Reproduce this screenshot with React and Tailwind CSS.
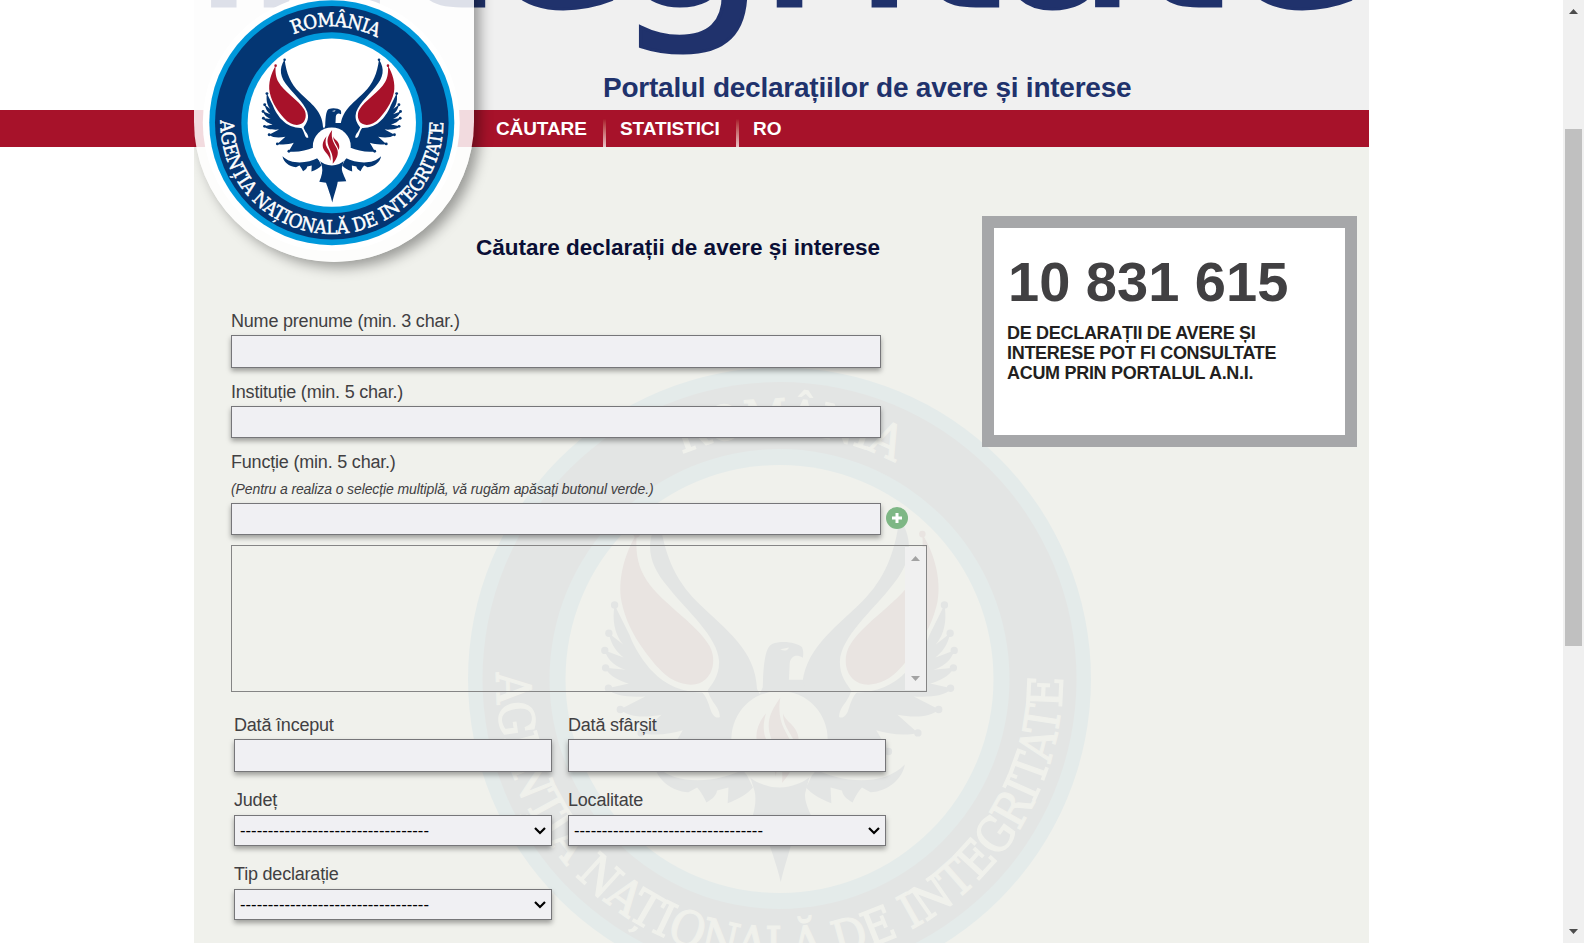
const WING =
  'M1077 425 C1066 520 1040 590 985 650 C910 730 842 780 838 885 L783 1000 L900 1030 C940 1050 1000 1062 1052 1055 L1020 996 C1050 1006 1090 1012 1122 1003 L1072 954 C1110 962 1150 962 1174 940 L1112 905 C1150 907 1190 905 1204 883 L1152 870 C1170 866 1200 852 1210 828 L1160 833 C1180 826 1204 810 1211 781 L1165 800 C1180 786 1195 770 1201 735 L1166 765 C1178 750 1196 715 1187 659 L1150 740 C1140 772 1115 815 1092 840 C1060 880 1000 900 962 893 C948 872 930 850 931 810 C934 745 1010 675 1055 612 C1105 548 1115 490 1077 425 Z';
const RED =
  'M1133 468 C1162 520 1180 590 1170 650 C1155 730 1110 790 1080 828 C1045 872 1000 882 973 866 C943 848 938 800 955 768 C985 708 1085 645 1115 580 C1133 545 1135 510 1133 468 Z';
const LOWER =
  'M870 1100 C930 1135 1035 1150 1090 1088 C1085 1125 1050 1160 1006 1163 L985 1150 C985 1150 975 1160 962 1190 C945 1180 938 1170 936 1158 L908 1150 L910 1192 C880 1180 860 1165 848 1150 Z';
const BALLS = [
  [1187, 659], [1201, 735], [1211, 781], [1209, 828], [1202, 883], [1173, 940], [1122, 1003], [1050, 1053],
];

function Half({ c }) {
  return (
    <g>
      <path d={WING} fill={c.navy} />
      {BALLS.map(([x, y]) => (
        <ellipse key={x} cx={x} cy={y} rx="9" ry="10" fill={c.navy} />
      ))}
      <ellipse cx="1077" cy="427" rx="8" ry="9" fill={c.navy} />
      <path d={RED} fill={c.red} />
      <ellipse cx="1133" cy="468" rx="8" ry="9" fill={c.red} />
      <path d="M960 885 C950 925 930 930 929 960 C938 966 948 955 952 940 C958 920 962 905 974 892 Z" fill={c.bg} />
      <path d={LOWER} fill={c.navy} />
    </g>
  );
}

function Emblem({ c, id }) {
  return (
    <g>
      <circle r="311.5" fill={c.cyan} />
      <circle r="297" fill={c.navy} />
      <circle r="230" fill={c.cyan} />
      <circle r="214" fill={c.bg} />
      <g transform="scale(.4082 .3717) translate(-783 -858)">
        <Half c={c} />
        <g transform="translate(1566 0) scale(-1 1)">
          <Half c={c} />
        </g>
        <path d="M742 880 C744 805 750 772 765 764 C790 753 825 760 838 772 C843 785 841 795 840 801 C824 790 811 797 808 815 L806 860 L840 860 L860 960 L710 960 Z" fill={c.navy} />
        <path d="M785 778 L806 773 C804 782 794 784 785 778 Z" fill={c.bg} />
        <path d="M700 1080 L866 1080 L846 1165 C842 1190 862 1225 873 1258 L820 1262 C815 1300 795 1360 786 1404 C777 1360 757 1300 747 1269 L705 1262 C720 1225 728 1190 722 1160 Z" fill={c.navy} />
        <ellipse cx="783" cy="1020" rx="118" ry="130" fill={c.bg} />
        <g fill={c.red}>
          <path d="M785 908 C765 940 752 965 758 1000 C766 1045 795 1065 789 1138 C812 1110 830 1070 815 1035 C800 1000 775 975 785 908 Z" />
          <path d="M750 950 C728 980 720 1010 732 1040 C742 1065 770 1080 774 1120 C782 1075 765 1050 752 1025 C742 1002 742 980 750 950 Z" />
          <path d="M792 950 C790 985 815 1005 826 1045 C836 1015 825 995 812 980 C802 968 794 962 792 950 Z" />
        </g>
      </g>
      <path id={`${id}-top`} d="M-97.7 -224.7 A245 245 0 0 1 133 -205.8" fill="none" />
      <path id={`${id}-bottom`} d="M-283 -6 A283 283 0 0 0 0 283 A283 283 0 0 0 280.2 -40" fill="none" />
      <g fill={c.text} stroke={c.text} strokeWidth="1.2" fontFamily="'DejaVu Serif Condensed', 'DejaVu Serif', serif" fontSize="48">
        <text textLength="220" lengthAdjust="spacing">
          <textPath href={`#${id}-top`}>ROMÂNIA</textPath>
        </text>
        <text textLength="897" lengthAdjust="spacing">
          <textPath href={`#${id}-bottom`}>AGENȚIA NAȚIONALĂ DE INTEGRITATE</textPath>
        </text>
      </g>
    </g>
  );
}

const SOLID = { navy: '#043673', cyan: '#0099dc', red: '#a8122a', bg: '#ffffff', text: '#ffffff' };
const FAINT = { navy: '#e3e5e4', cyan: '#e4ebea', red: '#e9e4e1', bg: '#f0f1ec', text: '#f0f1ec' };

const LETTERS = [
  ['i', 189.5, 1.1], ['n', 243, 1.1], ['t', 397, 1.05], ['e', 482, 1.07], ['g', 610.5, 1.11], ['r', 756, 1.1],
  ['i', 850, 1.1], ['t', 911, 1.05], ['a', 995, 1.05], ['t', 1134, 1.05], ['e', 1221, 1.07],
];

const FIELD = 'block box-border rounded-none border border-[#767679] bg-[#f0f0f3] shadow-[0_3px_5px_rgba(0,0,0,0.35)] outline-none';

function Label({ children, className = '' }) {
  return <label className={`block h-5 whitespace-nowrap text-[18px] leading-5 tracking-[-0.2px] text-[#414042] ${className}`}>{children}</label>;
}

function Select() {
  return (
    <div className={`${FIELD} flex h-[31px] w-[318px] items-center justify-between pr-[5px] pl-[5px]`}>
      <span className="text-[16.7px] leading-5 text-black">----------------------------------</span>
      <svg width="12" height="8" viewBox="0 0 12 8" className="mt-px">
        <path d="M1 1 L6 6 L11 1" fill="none" stroke="#000" strokeWidth="2.2" />
      </svg>
    </div>
  );
}

function Arrow({ up, color }) {
  return (
    <svg width="9" height="5" viewBox="0 0 9 5">
      <path d={up ? 'M0 5 L4.5 0 L9 5 Z' : 'M0 0 L4.5 5 L9 0 Z'} fill={color} />
    </svg>
  );
}

export default function App() {
  return (
    <div className="relative flex h-[943px] w-[1584px] overflow-hidden bg-white font-['Liberation_Sans',Arial,sans-serif]">
      <main className="w-[1563px]">
        <header className="relative ml-[194px] h-[110px] w-[1175px] overflow-hidden bg-[#f0f0f0]">
          <svg className="absolute top-0 left-0" width="1175" height="110" viewBox="194 0 1175 110">
            <g fill="#20326c" stroke="#20326c" strokeWidth="3" fontFamily="'DejaVu Sans', sans-serif" fontSize="224">
              {LETTERS.map(([l, x, s]) => (
                <text key={x} transform={`translate(${x} 6) scale(${s} 1)`}>{l}</text>
              ))}
            </g>
          </svg>
          <h2 className="relative pt-[72px] pl-[409px] text-[28px] leading-8 font-bold tracking-[-0.235px] whitespace-nowrap text-[#20326c]">
            Portalul declarațiilor de avere și interese
          </h2>
        </header>

        <nav className="flex h-[37px] w-[1369px] bg-[#a7122a] pl-[496px] text-[19px] leading-[37px] font-bold text-white">
          <a className="w-[107px] tracking-[-0.1px]">CĂUTARE</a>
          <span className="mt-[9px] h-7 w-[3px] bg-gradient-to-b from-[#a7122a] to-[#e6c3c9]" />
          <a className="w-[130px] pl-[14px] tracking-[-0.1px]">STATISTICI</a>
          <span className="mt-[9px] h-7 w-[3px] bg-gradient-to-b from-[#a7122a] to-[#e6c3c9]" />
          <a className="pl-[14px]">RO</a>
        </nav>

        <section className="relative ml-[194px] h-[796px] w-[1175px] overflow-hidden bg-[#f0f1ec]">
          <svg className="absolute top-0 left-0" width="1175" height="796" viewBox="194 147 1175 796">
            <g transform="translate(779.5 679)">
              <Emblem c={FAINT} id="watermark" />
            </g>
          </svg>

          <div className="relative flex justify-between pr-3">
            <form className="w-[700px] pt-[88px] pl-[37px]">
              <h1 className="h-[26px] w-[649px] text-right text-[22.5px] leading-[26px] font-bold whitespace-nowrap text-[#0a0f35]">
                Căutare declarații de avere și interese
              </h1>

              <Label className="mt-[50px]">Nume prenume (min. 3 char.)</Label>
              <input className={`${FIELD} mt-1 h-[33px] w-[650px]`} />

              <Label className="mt-[14px]">Instituție (min. 5 char.)</Label>
              <input className={`${FIELD} mt-1 h-8 w-[650px]`} />

              <Label className="mt-[14px]">Funcție (min. 5 char.)</Label>
              <p className="mt-[9px] h-4 text-[14px] leading-4 tracking-[-0.11px] whitespace-nowrap text-[#414042] italic">
                (Pentru a realiza o selecție multiplă, vă rugăm apăsați butonul verde.)
              </p>
              <div className="mt-[6px] flex w-[696px] items-center gap-[5px]">
                <input className={`${FIELD} h-8 w-[650px]`} />
                <svg className="-mt-[3px]" width="22" height="22" viewBox="0 0 22 22">
                  <circle cx="11" cy="11" r="11" fill="#7eb785" />
                  <path d="M11 6 V16 M6 11 H16" stroke="#fff" strokeWidth="3" />
                </svg>
              </div>

              <div className="mt-[10px] flex h-[147px] w-[696px] justify-end border border-[#858585] py-px">
                <div className="flex w-[21px] flex-col items-center justify-between bg-[#f0f0f0] py-[9px]">
                  <Arrow up color="#a3a3a3" />
                  <Arrow color="#a3a3a3" />
                </div>
              </div>

              <div className="mt-[23px] ml-[3px] grid w-[652px] grid-cols-[318px_318px] gap-x-4">
                <div className="h-[75px]">
                  <Label>Dată început</Label>
                  <input className={`${FIELD} mt-1 h-[33px] w-[318px]`} />
                </div>
                <div className="h-[75px]">
                  <Label>Dată sfârșit</Label>
                  <input className={`${FIELD} mt-1 h-[33px] w-[318px]`} />
                </div>
                <div className="flex h-[74px] flex-col gap-[5px]">
                  <Label>Județ</Label>
                  <Select />
                </div>
                <div className="flex h-[74px] flex-col gap-[5px]">
                  <Label>Localitate</Label>
                  <Select />
                </div>
                <div className="flex h-[74px] flex-col gap-[5px]">
                  <Label>Tip declarație</Label>
                  <Select />
                </div>
              </div>
            </form>

            <aside className="mt-[69px] h-[231px] w-[375px] shrink-0 border-12 border-[#a6a7a9] bg-white pt-[22px] pl-[13px] font-bold">
              <p className="h-16 pl-px text-[56px] leading-[64px] whitespace-nowrap text-[#414042]">10 831 615</p>
              <p className="mt-[9px] text-[18px] leading-5 tracking-[-0.3px] whitespace-nowrap text-[#231f20]">
                DE DECLARAȚII DE AVERE ȘI
                <br />
                INTERESE POT FI CONSULTATE
                <br />
                ACUM PRIN PORTALUL A.N.I.
              </p>
            </aside>
          </div>
        </section>
      </main>

      <div className="flex w-[21px] flex-col items-center bg-[#f0f0f0] pt-[9px]">
        <Arrow up color="#4d4d4d" />
        <div className="mt-[115px] h-[517px] w-[17px] bg-[#c0c0c0]" />
        <div className="mt-[283px] flex">
          <Arrow color="#4d4d4d" />
        </div>
      </div>

      <div className="absolute top-0 left-[194px] h-[300px] w-[320px] overflow-hidden">
        <svg width="320" height="300" viewBox="194 0 320 300">
          <defs>
            <filter id="soft" x="-20%" y="-20%" width="140%" height="140%">
              <feGaussianBlur stdDeviation="6.5" />
            </filter>
            <mask id="outside">
              <rect x="194" y="-60" width="340" height="400" fill="#fff" />
              <path d="M194 -60 H474 V122 A140 140 0 0 1 194 122 Z" fill="#000" />
            </mask>
          </defs>
          <g mask="url(#outside)">
            <path d="M201 -60 H480 V128 A139.500 139.500 0 0 1 201 128 Z" fill="#000" fillOpacity=".36" filter="url(#soft)" />
          </g>
          <path d="M194 -60 H474 V122 A140 140 0 0 1 194 122 Z" fill="#fff" fillOpacity=".85" />
          <circle cx="331.300" cy="122.700" r="128.500" fill="#fff" />
          <g transform="translate(331.800 122.700) scale(.3933)">
            <Emblem c={SOLID} id="logo" />
          </g>
        </svg>
      </div>
    </div>
  );
}
